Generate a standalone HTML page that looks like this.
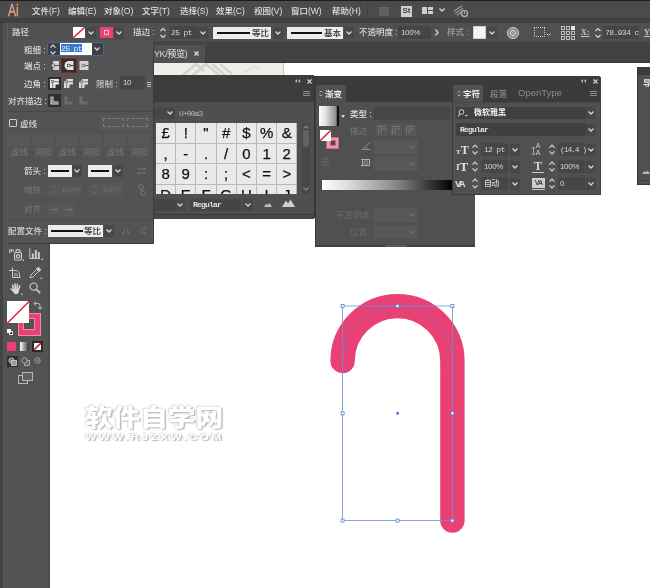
<!DOCTYPE html>
<html lang="zh-CN">
<head>
<meta charset="utf-8">
<title>Ai</title>
<style>
*{box-sizing:border-box;margin:0;padding:0}
html,body{width:650px;height:588px;overflow:hidden;background:#fff}
body{will-change:transform}
body{position:relative;font-family:"Liberation Sans","Noto Sans CJK SC",sans-serif;font-size:8.5px;color:#d6d6d6;line-height:1;font-weight:500}
.a{position:absolute}
.t{position:absolute;white-space:nowrap;line-height:10px;height:10px}
.dim{color:#7a7a7a}
.m{color:#e2e2e2}
.inp{position:absolute;background:#454545;border-radius:1px}
.wb{position:absolute;background:#ececec}
svg{position:absolute;overflow:visible}
.sans0{font-family:"Liberation Sans",sans-serif;letter-spacing:-0.35px !important}
.mono{font-family:"Liberation Mono","Noto Sans CJK SC",monospace}
</style>
</head>
<body>

<!-- ===== canvas strip under tab bar ===== -->
<div class="a" id="strip" style="left:154px;top:63px;width:130px;height:12px;background:#efeee9;overflow:hidden;border-right:1px solid #c4c4c4">
<svg style="left:0;top:0" width="130" height="12" viewBox="0 0 130 12"><g stroke="#d6d3cc" stroke-width="2.6" fill="none"><path d="M28 13 L42 1 L50 8 M38 13 L52 1 L66 13 M58 1 L72 13 M66 1 L78 11"/><path d="M90 10 L100 3 L106 7" stroke-width="1.6" stroke="#e0ddd7"/></g></svg></div>


<!-- ===== canvas artwork ===== -->
<div class="t" style="left:85px;top:405px;font-size:24px;line-height:26px;height:26px;color:#fff;font-weight:900;transform:scaleX(1.15);transform-origin:0 0;text-shadow:1.3px 1.3px 1px #bcbcbc,-1px -1px 1px #e0e0e0,0 0 2px #cfcfcf">软件自学网</div>
<div class="t" style="left:85px;top:431px;font-size:9.5px;line-height:11px;height:11px;color:#fff;font-weight:bold;letter-spacing:1.9px;transform:scaleX(1.245);transform-origin:0 0;text-shadow:1.3px 1.3px 1px #bcbcbc,-1px -1px 1px #e0e0e0,0 0 2px #cfcfcf">WWW.RJZXW.COM</div>
<svg style="left:0;top:0" width="650" height="588" viewBox="0 0 650 588">
<path d="M342.6 361 A54.9 54.9 0 0 1 452.4 361 V520.6" fill="none" stroke="#e94174" stroke-width="24.4" stroke-linecap="round"/>
<path d="M342.6 361 A54.9 54.9 0 0 1 452.4 361 V520.6" fill="none" stroke="#8c6cc8" stroke-width="1" opacity="0.8"/>
<rect x="342.6" y="306" width="109.8" height="214.6" fill="none" stroke="#6f8fd8" stroke-width="0.8"/>
<g fill="#fff" stroke="#5f7fd0" stroke-width="0.8">
<rect x="341.1" y="304.5" width="3" height="3"/><rect x="396" y="304.5" width="3" height="3"/><rect x="450.9" y="304.5" width="3" height="3"/>
<rect x="341.1" y="411.8" width="3" height="3"/><rect x="450.9" y="411.8" width="3" height="3"/>
<rect x="341.1" y="519.1" width="3" height="3"/><rect x="396" y="519.1" width="3" height="3"/><rect x="450.9" y="519.1" width="3" height="3"/>
</g>
<rect x="396.3" y="412" width="2.6" height="2.6" fill="#4a78c8"/>
</svg>

<!-- ===== top bars ===== -->
<div class="a" style="left:0;top:0;width:650px;height:1.3px;background:#1c1c1c"></div>
<div class="a" id="menubar" style="left:0;top:1.3px;width:650px;height:17px;background:#4b4b4b"></div>
<div class="a" style="left:0;top:18px;width:650px;height:4.6px;background:#404040"></div>
<div class="a" id="ctrlbar" style="left:0;top:22.5px;width:650px;height:18.5px;background:#505050"></div>
<div class="a" style="left:0;top:41px;width:650px;height:3px;background:#454545"></div>
<div class="a" id="tabbar" style="left:0;top:44px;width:650px;height:19px;background:#424242"></div>
<div class="a" id="tab" style="left:153px;top:45px;width:52px;height:18px;background:#515151"></div>
<div class="a" style="left:205px;top:61.5px;width:445px;height:1.5px;background:#383838"></div>


<!-- ===== menu bar content ===== -->
<div class="t" style="left:8px;top:3px;font-size:16px;line-height:16px;height:16px;color:#dba383;transform:scaleX(0.76);transform-origin:0 0;-webkit-text-stroke:0.35px #dba383">Ai</div>
<div class="t m" style="left:32px;top:6px">文件(F)</div>
<div class="t m" style="left:68px;top:6px">编辑(E)</div>
<div class="t m" style="left:104px;top:6px">对象(O)</div>
<div class="t m" style="left:142px;top:6px">文字(T)</div>
<div class="t m" style="left:180px;top:6px">选择(S)</div>
<div class="t m" style="left:216px;top:6px">效果(C)</div>
<div class="t m" style="left:254px;top:6px">视图(V)</div>
<div class="t m" style="left:291px;top:6px">窗口(W)</div>
<div class="t m" style="left:332px;top:6px">帮助(H)</div>
<div class="a" style="left:367px;top:4px;width:1px;height:13px;background:#414141"></div>
<div class="a" style="left:378.5px;top:6.5px;width:10.5px;height:9.5px;background:#606060"></div>
<div class="a" style="left:401px;top:6px;width:11px;height:10.5px;background:#cfcfcf;color:#444;font-size:8px;line-height:10.5px;text-align:center;font-weight:bold">St</div>
<div class="a" style="left:422px;top:6.5px;width:5px;height:7.5px;background:#cfcfcf"></div>
<div class="a" style="left:428px;top:6.5px;width:5px;height:3px;background:#cfcfcf"></div>
<div class="a" style="left:428px;top:10.5px;width:5px;height:3.5px;background:#cfcfcf"></div>
<svg style="left:439px;top:8px" width="6" height="4" viewBox="0 0 6 4"><path d="M0.5 0.5 L3 3 L5.5 0.5" fill="none" stroke="#d6d6d6" stroke-width="1.3"/></svg>
<svg style="left:453px;top:4px" width="16" height="14" viewBox="0 0 16 14"><path d="M1 7 L9 2 M2 9.5 L10 4.5 M4 11 L9 8" stroke="#9a9a9a" stroke-width="1.4" fill="none"/><circle cx="11.5" cy="9.5" r="3" fill="none" stroke="#bdbdbd" stroke-width="1.1"/><path d="M11.5 7.5 V9.7" stroke="#bdbdbd" stroke-width="1"/></svg>

<!-- ===== control bar content ===== -->
<div class="a" style="left:7px;top:23px;width:1px;height:18px;background:#5f5f5f"></div>
<div class="t" style="left:12px;top:27px">路径</div>
<div class="a" style="left:73px;top:27px;width:12px;height:11px;background:#fff;overflow:hidden"><svg style="left:0;top:0" width="12" height="11"><path d="M0 11 L12 0" stroke="#d8232a" stroke-width="1.4"/></svg></div>
<div class="a" style="left:86px;top:26.5px;width:10px;height:12.5px;background:#474747;border-radius:1.5px"></div><svg class="dd" style="left:88px;top:31px" width="6" height="4" viewBox="0 0 6 4"><path d="M0.5 0.5 L3 3 L5.5 0.5" fill="none" stroke="#d6d6d6" stroke-width="1.3"/></svg>
<div class="a" style="left:100px;top:27px;width:13px;height:11px;background:#e94174"></div>
<div class="a" style="left:104px;top:30px;width:5px;height:5px;border:1px solid #f6c1d2"></div>
<div class="a" style="left:114px;top:26.5px;width:10px;height:12.5px;background:#474747;border-radius:1.5px"></div><svg class="dd" style="left:116px;top:31px" width="6" height="4" viewBox="0 0 6 4"><path d="M0.5 0.5 L3 3 L5.5 0.5" fill="none" stroke="#d6d6d6" stroke-width="1.3"/></svg>
<div class="t" style="left:133px;top:27px">描边 :</div>
<svg style="left:160px;top:27px" width="6" height="12" viewBox="0 0 6 12"><path d="M0.5 4 L3 1.5 L5.5 4 M0.5 8 L3 10.5 L5.5 8" fill="none" stroke="#d6d6d6" stroke-width="1.2"/></svg>
<div class="inp" style="left:169px;top:26px;width:29px;height:13px"></div>
<div class="t mono" style="left:171px;top:28px;font-size:8px;letter-spacing:-0.6px">25 pt</div>
<div class="a" style="left:198px;top:26.5px;width:10px;height:12.5px;background:#474747;border-radius:1.5px"></div><svg class="dd" style="left:200px;top:31px" width="6" height="4" viewBox="0 0 6 4"><path d="M0.5 0.5 L3 3 L5.5 0.5" fill="none" stroke="#d6d6d6" stroke-width="1.3"/></svg>
<div class="wb" style="left:213px;top:27px;width:58px;height:12px"></div>
<div class="a" style="left:217px;top:31.5px;width:33px;height:2.6px;background:#111"></div>
<div class="t" style="left:252px;top:28px;color:#333">等比</div>
<div class="a" style="left:273px;top:26.5px;width:10px;height:12.5px;background:#474747;border-radius:1.5px"></div><svg class="dd" style="left:275px;top:31px" width="6" height="4" viewBox="0 0 6 4"><path d="M0.5 0.5 L3 3 L5.5 0.5" fill="none" stroke="#d6d6d6" stroke-width="1.3"/></svg>
<div class="wb" style="left:287px;top:27px;width:56px;height:12px"></div>
<div class="a" style="left:291px;top:31.5px;width:31px;height:2.6px;background:#111"></div>
<div class="t" style="left:324px;top:28px;color:#333">基本</div>
<div class="a" style="left:344px;top:26.5px;width:10px;height:12.5px;background:#474747;border-radius:1.5px"></div><svg class="dd" style="left:346px;top:31px" width="6" height="4" viewBox="0 0 6 4"><path d="M0.5 0.5 L3 3 L5.5 0.5" fill="none" stroke="#d6d6d6" stroke-width="1.3"/></svg>
<div class="t" style="left:359px;top:27px">不透明度 :</div>
<div class="inp" style="left:398px;top:26px;width:33px;height:13px"></div>
<div class="t sans0" style="left:401px;top:28px;font-size:8px;letter-spacing:-0.6px">100%</div>
<svg style="left:435px;top:29px" width="4" height="7" viewBox="0 0 4 7"><path d="M0.5 0.5 L3 3.5 L0.5 6.5" fill="none" stroke="#d6d6d6" stroke-width="1.3"/></svg>
<div class="t dim" style="left:447px;top:27px;color:#a0a0a0">样式 :</div>
<div class="a" style="left:473px;top:26px;width:13px;height:13px;background:#f4f4f4;border:1px solid #cfcfcf"></div>
<div class="a" style="left:487px;top:26.5px;width:10px;height:12.5px;background:#474747;border-radius:1.5px"></div><svg class="dd" style="left:489px;top:31px" width="6" height="4" viewBox="0 0 6 4"><path d="M0.5 0.5 L3 3 L5.5 0.5" fill="none" stroke="#d6d6d6" stroke-width="1.3"/></svg>
<svg style="left:506px;top:26px" width="14" height="14" viewBox="0 0 14 14"><circle cx="7" cy="7" r="5.6" fill="#8a8a8a" stroke="#c8c8c8" stroke-width="1"/><circle cx="7" cy="7" r="2.6" fill="none" stroke="#d8d8d8" stroke-width="1"/><path d="M7 1.5 V12.5 M1.5 7 H12.5" stroke="#b0b0b0" stroke-width="0.7"/></svg>
<div class="a" style="left:534px;top:27px;width:11px;height:10px;border:1px dotted #c8c8c8"></div>
<svg class="dd" style="left:546px;top:33px" width="5" height="3" viewBox="0 0 5 3"><path d="M0.5 0.5 L2.5 2.5 L4.5 0.5" fill="none" stroke="#c8c8c8" stroke-width="1"/></svg>
<svg style="left:561px;top:26px" width="14" height="14" viewBox="0 0 14 14"><g fill="none" stroke="#c8c8c8" stroke-width="0.9"><rect x="0.5" y="0.5" width="3" height="3"/><rect x="5.5" y="0.5" width="3" height="3"/><rect x="0.5" y="5.5" width="3" height="3"/><rect x="5.5" y="5.5" width="3" height="3"/><rect x="10.5" y="5.5" width="3" height="3"/><rect x="0.5" y="10.5" width="3" height="3"/><rect x="5.5" y="10.5" width="3" height="3"/><rect x="10.5" y="10.5" width="3" height="3"/></g><rect x="10" y="0" width="4" height="4" fill="#e8e8e8"/></svg>
<div class="t" style="left:581px;top:28px;font-family:'Liberation Serif',serif;font-size:8px;font-weight:bold;color:#c4c4c4;text-decoration:underline">X:</div>
<svg style="left:595px;top:27px" width="6" height="12" viewBox="0 0 6 12"><path d="M0.5 4 L3 1.5 L5.5 4 M0.5 8 L3 10.5 L5.5 8" fill="none" stroke="#d6d6d6" stroke-width="1.2"/></svg>
<div class="inp" style="left:603px;top:26px;width:36px;height:13px"></div>
<div class="t mono" style="left:605px;top:28px;font-size:8px;letter-spacing:-0.6px">78.934 c</div>
<div class="t" style="left:644px;top:28px;font-family:'Liberation Serif',serif;font-size:8px;font-weight:bold;color:#c4c4c4;text-decoration:underline">Y:</div>

<!-- ===== tab ===== -->
<div class="t" style="left:154px;top:49px;font-size:9px;letter-spacing:-0.4px">YK/预览)</div>
<svg style="left:194px;top:51px" width="5" height="5" viewBox="0 0 5 5"><path d="M0.5 0.5 L4.5 4.5 M4.5 0.5 L0.5 4.5" stroke="#e0e0e0" stroke-width="1.3"/></svg>

<!-- ===== tools panel ===== -->
<div class="a" id="tools" style="left:0;top:40px;width:50px;height:548px;background:#535353"></div>
<div class="a" style="left:0;top:23px;width:3px;height:565px;background:#444"></div>


<!-- tools content -->
<svg style="left:9px;top:247.5px" width="15" height="13" viewBox="0 0 15 13"><g stroke="#d0d0d0" fill="none" stroke-width="1.1"><rect x="5.5" y="4.5" width="7" height="7.5" rx="1.2"/><path d="M7 4.5 V2.5 Q9 0.8 11 2.5 V4.5"/><circle cx="9" cy="8.3" r="1.7"/><path d="M0.8 1 V5 M2.6 1 V4 M4.2 1.5 V3.5"/></g><path d="M13 13 H15 V11 Z" fill="#c8c8c8"/></svg>
<svg style="left:29px;top:248px" width="14" height="12" viewBox="0 0 14 12"><path d="M0.8 0.5 V10.5 H11" stroke="#c8c8c8" fill="none" stroke-width="1"/><path d="M3.8 10 V5.5 M6.8 10 V2 M9.8 10 V4" stroke="#d0d0d0" stroke-width="1.9"/><path d="M12 12 H14 V10 Z" fill="#c8c8c8"/></svg>
<svg style="left:9px;top:266.5px" width="12" height="11" viewBox="0 0 12 11"><path d="M0 3.5 H8 L10.5 6 V10.5 M3.5 0.5 V10.5 H11.5" stroke="#c8c8c8" fill="none" stroke-width="1"/><path d="M5 6 H8 L9 7 V9.5 H5 Z" fill="#8a8a8a"/></svg>
<svg style="left:29px;top:266px" width="13" height="13" viewBox="0 0 13 13"><path d="M1 12 L2 9 L7.5 3.5 L9.5 5.5 L4 11 Z" fill="none" stroke="#c8c8c8" stroke-width="1"/><path d="M7 2.5 L9.5 0.8 L12.2 3.5 L10.5 6 Z" fill="#c8c8c8"/><path d="M11 13 H13 V11 Z" fill="#c8c8c8"/></svg>
<svg style="left:10px;top:282.5px" width="13" height="12" viewBox="0 0 13 12"><g stroke="#d8d8d8" stroke-width="1.5" stroke-linecap="round" fill="none"><path d="M3.6 6 L2.6 2.2 M5.3 5.4 L5 0.9 M7 5.5 L7.4 1.3 M8.6 6.2 L9.7 3"/><path d="M3.3 8.2 L1 5.8" stroke-width="1.4"/></g><path d="M2.8 6 L8.8 5.6 Q9.6 8 7.8 11 H4.6 Q3.2 9.5 2.8 6 Z" fill="#d8d8d8"/><path d="M10.5 12 H12.5 V10 Z" fill="#c8c8c8"/></svg>
<svg style="left:29px;top:282px" width="12" height="12" viewBox="0 0 12 12"><circle cx="4.6" cy="4.6" r="3.6" fill="none" stroke="#c8c8c8" stroke-width="1.2"/><path d="M7.3 7.3 L11.2 11.2" stroke="#c8c8c8" stroke-width="1.7"/></svg>
<!-- fill / stroke -->
<div class="a" style="left:17.5px;top:312.5px;width:23px;height:23px;background:#e94174;border:1px solid #f08aa8"></div>
<div class="a" style="left:23px;top:318px;width:12px;height:12px;background:#535353;border:1px solid #f08aa8"></div>
<div class="a" style="left:6.5px;top:300.5px;width:22.5px;height:22.5px;background:#fff;overflow:hidden"><svg style="left:0;top:0" width="23" height="23"><path d="M0 22.5 L22.5 0" stroke="#d8232a" stroke-width="1.4"/></svg></div>
<svg style="left:33px;top:301px" width="9" height="9" viewBox="0 0 9 9"><path d="M1.5 2.5 H5 A2 2 0 0 1 7 4.5 V8" stroke="#c0c0c0" fill="none" stroke-width="1"/><path d="M3 0.5 L0.8 2.5 L3 4.5 M5 6 L7 8.3 L9 6" stroke="#c0c0c0" fill="none" stroke-width="1"/></svg>
<div class="a" style="left:9px;top:331px;width:4px;height:4px;background:#222;border:0.5px solid #ddd"></div>
<div class="a" style="left:7px;top:329px;width:4px;height:4px;background:#fff"></div>
<!-- color mode -->
<div class="a" style="left:7px;top:342px;width:9px;height:9px;background:#e94174"></div>
<div class="a" style="left:20px;top:342px;width:9px;height:9px;background:linear-gradient(90deg,#fff,#333)"></div>
<div class="a" style="left:32px;top:341px;width:11px;height:11px;background:#2b2b2b"></div>
<div class="a" style="left:34px;top:343px;width:7px;height:7px;background:#fff;overflow:hidden"><svg style="left:0;top:0" width="7" height="7"><path d="M0 7 L7 0" stroke="#d8232a" stroke-width="1.6"/></svg></div>
<!-- draw modes -->
<div class="a" style="left:7px;top:356px;width:11px;height:11px;background:#2f2f2f"></div>
<svg style="left:8px;top:357px" width="9" height="9" viewBox="0 0 9 9"><circle cx="3.5" cy="3.5" r="2.6" fill="#777" stroke="#d0d0d0" stroke-width="0.8"/><rect x="3.5" y="3.5" width="5" height="5" fill="#999" stroke="#d0d0d0" stroke-width="0.8"/></svg>
<svg style="left:21px;top:357px" width="9" height="9" viewBox="0 0 9 9"><rect x="3.5" y="3.5" width="5" height="5" fill="#6a6a6a" stroke="#b8b8b8" stroke-width="0.8"/><circle cx="3.5" cy="3.5" r="2.6" fill="#535353" stroke="#b8b8b8" stroke-width="0.8"/></svg>
<svg style="left:34px;top:357px" width="8" height="8" viewBox="0 0 8 8"><circle cx="3.5" cy="3.5" r="2.8" fill="#535353" stroke="#a8a8a8" stroke-width="0.8"/><rect x="2.5" y="2.5" width="3" height="2" fill="#888"/></svg>
<svg style="left:18px;top:372px" width="15" height="12" viewBox="0 0 15 12"><rect x="0.5" y="3.5" width="9" height="8" fill="#535353" stroke="#b8b8b8" stroke-width="1"/><rect x="4.5" y="0.5" width="10" height="8" fill="#606060" stroke="#b8b8b8" stroke-width="1"/></svg>
<div class="a" style="left:49px;top:243px;width:1px;height:345px;background:#454545"></div>

<!-- ===== glyph panel ===== -->
<div class="a" id="glyph" style="left:154px;top:75px;width:160px;height:144px;background:#4f4f4f"></div>
<div class="a" style="left:154px;top:75px;width:160px;height:27px;background:#3c3c3c"></div>


<!-- glyph panel content -->
<svg style="left:295px;top:79px" width="5" height="4" viewBox="0 0 5 4"><path d="M2 0 L0 2 L2 4 Z M5 0 L3 2 L5 4 Z" fill="#bdbdbd"/></svg>
<svg style="left:307px;top:79px" width="5" height="5" viewBox="0 0 5 5"><path d="M0.5 0.5 L4.5 4.5 M4.5 0.5 L0.5 4.5" stroke="#d0d0d0" stroke-width="1.2"/></svg>
<svg style="left:303px;top:91px" width="7" height="5" viewBox="0 0 7 5"><path d="M0 0.5 H7 M0 2.5 H7 M0 4.5 H7" stroke="#8c8c8c" stroke-width="1"/></svg>

<div class="a" style="left:154px;top:107px;width:21px;height:12px;background:#464646"></div>
<svg style="left:167px;top:111px" width="6" height="4" viewBox="0 0 6 4"><path d="M0.5 0.5 L3 3 L5.5 0.5" fill="none" stroke="#d6d6d6" stroke-width="1.3"/></svg>
<div class="t mono" style="left:179px;top:109px;font-size:8px;letter-spacing:-0.9px;color:#b8b8b8">U+00a3</div>
<div class="a" id="grid" style="left:156px;top:123px;width:141px;height:71px;background:#e9e9e9;overflow:hidden;color:#111;font-family:'Liberation Sans',sans-serif">
<div class="a" style="left:0.0px;top:0.0px;width:20.2px;height:20.5px;border-right:1px solid #b9b9b9;border-bottom:1px solid #b9b9b9;text-align:center;font-size:15px;line-height:20.5px;-webkit-text-stroke:0.25px #111">£</div><div class="a" style="left:20.2px;top:0.0px;width:20.2px;height:20.5px;border-right:1px solid #b9b9b9;border-bottom:1px solid #b9b9b9;text-align:center;font-size:15px;line-height:20.5px;-webkit-text-stroke:0.25px #111">!</div><div class="a" style="left:40.4px;top:0.0px;width:20.2px;height:20.5px;border-right:1px solid #b9b9b9;border-bottom:1px solid #b9b9b9;text-align:center;font-size:15px;line-height:20.5px;-webkit-text-stroke:0.25px #111">&quot;</div><div class="a" style="left:60.6px;top:0.0px;width:20.2px;height:20.5px;border-right:1px solid #b9b9b9;border-bottom:1px solid #b9b9b9;text-align:center;font-size:15px;line-height:20.5px;-webkit-text-stroke:0.25px #111">#</div><div class="a" style="left:80.8px;top:0.0px;width:20.2px;height:20.5px;border-right:1px solid #b9b9b9;border-bottom:1px solid #b9b9b9;text-align:center;font-size:15px;line-height:20.5px;-webkit-text-stroke:0.25px #111">$</div><div class="a" style="left:101.0px;top:0.0px;width:20.2px;height:20.5px;border-right:1px solid #b9b9b9;border-bottom:1px solid #b9b9b9;text-align:center;font-size:15px;line-height:20.5px;-webkit-text-stroke:0.25px #111">%</div><div class="a" style="left:121.2px;top:0.0px;width:20.2px;height:20.5px;border-right:1px solid #b9b9b9;border-bottom:1px solid #b9b9b9;text-align:center;font-size:15px;line-height:20.5px;-webkit-text-stroke:0.25px #111">&amp;</div><div class="a" style="left:0.0px;top:20.5px;width:20.2px;height:20.5px;border-right:1px solid #b9b9b9;border-bottom:1px solid #b9b9b9;text-align:center;font-size:15px;line-height:20.5px;-webkit-text-stroke:0.25px #111">,</div><div class="a" style="left:20.2px;top:20.5px;width:20.2px;height:20.5px;border-right:1px solid #b9b9b9;border-bottom:1px solid #b9b9b9;text-align:center;font-size:15px;line-height:20.5px;-webkit-text-stroke:0.25px #111">-</div><div class="a" style="left:40.4px;top:20.5px;width:20.2px;height:20.5px;border-right:1px solid #b9b9b9;border-bottom:1px solid #b9b9b9;text-align:center;font-size:15px;line-height:20.5px;-webkit-text-stroke:0.25px #111">.</div><div class="a" style="left:60.6px;top:20.5px;width:20.2px;height:20.5px;border-right:1px solid #b9b9b9;border-bottom:1px solid #b9b9b9;text-align:center;font-size:15px;line-height:20.5px;-webkit-text-stroke:0.25px #111">/</div><div class="a" style="left:80.8px;top:20.5px;width:20.2px;height:20.5px;border-right:1px solid #b9b9b9;border-bottom:1px solid #b9b9b9;text-align:center;font-size:15px;line-height:20.5px;-webkit-text-stroke:0.25px #111">0</div><div class="a" style="left:101.0px;top:20.5px;width:20.2px;height:20.5px;border-right:1px solid #b9b9b9;border-bottom:1px solid #b9b9b9;text-align:center;font-size:15px;line-height:20.5px;-webkit-text-stroke:0.25px #111">1</div><div class="a" style="left:121.2px;top:20.5px;width:20.2px;height:20.5px;border-right:1px solid #b9b9b9;border-bottom:1px solid #b9b9b9;text-align:center;font-size:15px;line-height:20.5px;-webkit-text-stroke:0.25px #111">2</div><div class="a" style="left:0.0px;top:41.0px;width:20.2px;height:20.5px;border-right:1px solid #b9b9b9;border-bottom:1px solid #b9b9b9;text-align:center;font-size:15px;line-height:20.5px;-webkit-text-stroke:0.25px #111">8</div><div class="a" style="left:20.2px;top:41.0px;width:20.2px;height:20.5px;border-right:1px solid #b9b9b9;border-bottom:1px solid #b9b9b9;text-align:center;font-size:15px;line-height:20.5px;-webkit-text-stroke:0.25px #111">9</div><div class="a" style="left:40.4px;top:41.0px;width:20.2px;height:20.5px;border-right:1px solid #b9b9b9;border-bottom:1px solid #b9b9b9;text-align:center;font-size:15px;line-height:20.5px;-webkit-text-stroke:0.25px #111">:</div><div class="a" style="left:60.6px;top:41.0px;width:20.2px;height:20.5px;border-right:1px solid #b9b9b9;border-bottom:1px solid #b9b9b9;text-align:center;font-size:15px;line-height:20.5px;-webkit-text-stroke:0.25px #111">;</div><div class="a" style="left:80.8px;top:41.0px;width:20.2px;height:20.5px;border-right:1px solid #b9b9b9;border-bottom:1px solid #b9b9b9;text-align:center;font-size:15px;line-height:20.5px;-webkit-text-stroke:0.25px #111">&lt;</div><div class="a" style="left:101.0px;top:41.0px;width:20.2px;height:20.5px;border-right:1px solid #b9b9b9;border-bottom:1px solid #b9b9b9;text-align:center;font-size:15px;line-height:20.5px;-webkit-text-stroke:0.25px #111">=</div><div class="a" style="left:121.2px;top:41.0px;width:20.2px;height:20.5px;border-right:1px solid #b9b9b9;border-bottom:1px solid #b9b9b9;text-align:center;font-size:15px;line-height:20.5px;-webkit-text-stroke:0.25px #111">&gt;</div><div class="a" style="left:0.0px;top:61.5px;width:20.2px;height:20.5px;border-right:1px solid #b9b9b9;border-bottom:1px solid #b9b9b9;text-align:center;font-size:15px;line-height:20.5px;-webkit-text-stroke:0.25px #111">D</div><div class="a" style="left:20.2px;top:61.5px;width:20.2px;height:20.5px;border-right:1px solid #b9b9b9;border-bottom:1px solid #b9b9b9;text-align:center;font-size:15px;line-height:20.5px;-webkit-text-stroke:0.25px #111">E</div><div class="a" style="left:40.4px;top:61.5px;width:20.2px;height:20.5px;border-right:1px solid #b9b9b9;border-bottom:1px solid #b9b9b9;text-align:center;font-size:15px;line-height:20.5px;-webkit-text-stroke:0.25px #111">F</div><div class="a" style="left:60.6px;top:61.5px;width:20.2px;height:20.5px;border-right:1px solid #b9b9b9;border-bottom:1px solid #b9b9b9;text-align:center;font-size:15px;line-height:20.5px;-webkit-text-stroke:0.25px #111">G</div><div class="a" style="left:80.8px;top:61.5px;width:20.2px;height:20.5px;border-right:1px solid #b9b9b9;border-bottom:1px solid #b9b9b9;text-align:center;font-size:15px;line-height:20.5px;-webkit-text-stroke:0.25px #111">H</div><div class="a" style="left:101.0px;top:61.5px;width:20.2px;height:20.5px;border-right:1px solid #b9b9b9;border-bottom:1px solid #b9b9b9;text-align:center;font-size:15px;line-height:20.5px;-webkit-text-stroke:0.25px #111">I</div><div class="a" style="left:121.2px;top:61.5px;width:20.2px;height:20.5px;border-right:1px solid #b9b9b9;border-bottom:1px solid #b9b9b9;text-align:center;font-size:15px;line-height:20.5px;-webkit-text-stroke:0.25px #111">J</div>
</div>
<div class="a" style="left:302px;top:123px;width:8px;height:71px;background:#474747;border-radius:3px"></div>
<div class="a" style="left:303px;top:130px;width:6px;height:17px;background:#636363;border-radius:3px"></div>
<svg style="left:303px;top:125px" width="6" height="4" viewBox="0 0 6 4"><path d="M0.5 3.5 L3 1 L5.5 3.5" fill="none" stroke="#8a8a8a" stroke-width="1.1"/></svg>
<svg style="left:303px;top:187px" width="6" height="4" viewBox="0 0 6 4"><path d="M0.5 0.5 L3 3 L5.5 0.5" fill="none" stroke="#8a8a8a" stroke-width="1.1"/></svg>
<div class="inp" style="left:154px;top:199px;width:21px;height:12px;background:#454545"></div>
<div class="a" style="left:175px;top:198.5px;width:10px;height:12.5px;background:#474747;border-radius:1.5px"></div><svg style="left:177px;top:203px" width="6" height="4" viewBox="0 0 6 4"><path d="M0.5 0.5 L3 3 L5.5 0.5" fill="none" stroke="#d6d6d6" stroke-width="1.3"/></svg>
<div class="inp" style="left:190px;top:199px;width:51px;height:12px;background:#454545"></div>
<div class="t mono" style="left:193px;top:200px;font-size:8px;letter-spacing:-0.8px;font-weight:bold;color:#e0e0e0">Regular</div>
<div class="a" style="left:243px;top:198.5px;width:10px;height:12.5px;background:#474747;border-radius:1.5px"></div><svg style="left:245px;top:203px" width="6" height="4" viewBox="0 0 6 4"><path d="M0.5 0.5 L3 3 L5.5 0.5" fill="none" stroke="#d6d6d6" stroke-width="1.3"/></svg>
<svg style="left:264px;top:202px" width="8" height="5" viewBox="0 0 8 5"><path d="M0 5 L2.5 1.5 L4 3 L5.5 1 L8 5 Z" fill="#bdbdbd"/></svg>
<svg style="left:282px;top:199px" width="13" height="8" viewBox="0 0 13 8"><path d="M0 8 L4 1.5 L6 4.5 L8.5 0.5 L13 8 Z" fill="#cfcfcf"/></svg>
<div class="a" style="left:154px;top:214px;width:160px;height:1px;background:#3a3a3a"></div>
<div class="a" style="left:154px;top:215px;width:160px;height:4px;background:#474747"></div>
<div class="a" style="left:314px;top:76px;width:1px;height:142px;background:#333"></div>

<!-- ===== gradient panel ===== -->
<div class="a" id="grad" style="left:315px;top:76px;width:160px;height:171px;background:#505050"></div>
<div class="a" style="left:315px;top:76px;width:160px;height:26px;background:#3b3b3b"></div>


<!-- gradient panel content -->
<div class="a" style="left:316px;top:85px;width:30px;height:17px;background:#505050"></div>
<svg style="left:319px;top:90px" width="4" height="7" viewBox="0 0 4 7"><path d="M0.5 2.5 L2 1 L3.5 2.5 M0.5 4.5 L2 6 L3.5 4.5" fill="none" stroke="#c0c0c0" stroke-width="0.8"/></svg>
<div class="t" style="left:325px;top:89px;color:#e6e6e6;font-weight:bold">渐变</div>
<div class="a" style="left:319px;top:106px;width:20px;height:20px;background:linear-gradient(90deg,#fff 0%,#e4e4e4 30%,#8c8c8c 85%,#111 93%,#000 100%)"></div>
<svg style="left:341px;top:115px" width="4" height="3" viewBox="0 0 4 3"><path d="M0 0 H4 L2 3 Z" fill="#cfcfcf"/></svg>
<div class="t" style="left:350px;top:109px;color:#e0e0e0">类型 :</div>
<div class="a" style="left:374px;top:107px;width:76px;height:12.5px;background:#464646"></div>
<div class="a" style="left:326px;top:136.5px;width:13px;height:12.5px;background:#e79ab2;border:1px solid #de5e88"></div>
<div class="a" style="left:329.5px;top:140px;width:6px;height:6px;background:#4a4a4a;border:1px solid #de5e88"></div>
<div class="a" style="left:320px;top:130px;width:11px;height:11px;background:#fff;overflow:hidden"><svg style="left:0;top:0" width="11" height="11"><path d="M0 11 L11 0" stroke="#c8222c" stroke-width="1.4"/></svg></div>

<div class="t" style="left:350px;top:126px;color:#727272">描边 :</div>
<div class="a" style="left:376px;top:124px;width:12px;height:12px;background:#585858"></div>
<div class="a" style="left:390px;top:124px;width:12px;height:12px;background:#585858"></div>
<div class="a" style="left:404px;top:124px;width:12px;height:12px;background:#585858"></div>
<svg style="left:378px;top:126px" width="8" height="8" viewBox="0 0 8 8"><path d="M0.5 8 V0.5 H8 M3 8 V3 H8" stroke="#747474" stroke-width="1" fill="none"/></svg>
<svg style="left:392px;top:126px" width="8" height="8" viewBox="0 0 8 8"><path d="M0.5 8 V0.5 H8 M3 8 V3 H8" stroke="#747474" stroke-width="1" fill="none"/></svg>
<svg style="left:406px;top:126px" width="8" height="8" viewBox="0 0 8 8"><path d="M0.5 8 V0.5 H8 M3 8 V3 H8" stroke="#747474" stroke-width="1" fill="none"/></svg>
<svg style="left:361px;top:142px" width="10" height="8" viewBox="0 0 10 8"><path d="M9 0.5 L0.8 7.5 H9.5 M6 7.5 A4 4 0 0 0 4.5 4.3" stroke="#8a8a8a" stroke-width="1" fill="none"/></svg>
<div class="a" style="left:374px;top:140px;width:44px;height:14px;background:#575757"></div>
<svg style="left:409px;top:145px" width="6" height="4" viewBox="0 0 6 4"><path d="M0.5 0.5 L3 3 L5.5 0.5" fill="none" stroke="#6e6e6e" stroke-width="1.3"/></svg>
<svg style="left:321px;top:157px" width="10" height="10" viewBox="0 0 10 10"><path d="M0.5 2 H6 M0.5 5 H9 M2 8 H9 M6 0.5 V3.5" stroke="#6a6a6a" stroke-width="1" fill="none"/></svg>
<svg style="left:361px;top:158px" width="10" height="9" viewBox="0 0 10 9"><rect x="1.5" y="1.5" width="7" height="6" fill="none" stroke="#b0b0b0" stroke-width="1"/><circle cx="5" cy="4.5" r="1.8" fill="none" stroke="#b0b0b0" stroke-width="0.8"/><path d="M0 1.5 H1.5 M0 7.5 H1.5" stroke="#b0b0b0" stroke-width="1"/></svg>
<div class="a" style="left:374px;top:157px;width:44px;height:14px;background:#575757"></div>
<svg style="left:409px;top:162px" width="6" height="4" viewBox="0 0 6 4"><path d="M0.5 0.5 L3 3 L5.5 0.5" fill="none" stroke="#6e6e6e" stroke-width="1.3"/></svg>
<div class="a" style="left:322px;top:179.7px;width:130px;height:10.8px;background:linear-gradient(90deg,#fff 0%,#dcdcdc 20%,#858585 58%,#101010 95%,#000 100%)"></div>
<div class="t" style="left:336px;top:210px;color:#666">不透明度 :</div>
<div class="a" style="left:373px;top:208px;width:45px;height:14px;background:#575757"></div>
<svg style="left:409px;top:213px" width="6" height="4" viewBox="0 0 6 4"><path d="M0.5 0.5 L3 3 L5.5 0.5" fill="none" stroke="#6e6e6e" stroke-width="1.3"/></svg>
<div class="t" style="left:350px;top:227px;color:#666">位置 :</div>
<div class="a" style="left:373px;top:225px;width:45px;height:14px;background:#575757"></div>
<svg style="left:409px;top:230px" width="6" height="4" viewBox="0 0 6 4"><path d="M0.5 0.5 L3 3 L5.5 0.5" fill="none" stroke="#6e6e6e" stroke-width="1.3"/></svg>
<div class="a" style="left:315px;top:245px;width:160px;height:2px;background:#3e3e3e"></div>
<div class="a" style="left:385px;top:245px;width:22px;height:2px;background:#5a5a5a"></div>
<div class="a" style="left:315px;top:76px;width:1px;height:171px;background:#3a3a3a"></div>

<!-- ===== char panel ===== -->
<div class="a" id="char" style="left:452px;top:76px;width:149px;height:119px;background:#505050;border-radius:0 3px 0 0"></div>
<div class="a" style="left:452px;top:76px;width:149px;height:26px;background:#3b3b3b;border-radius:0 3px 0 0"></div>


<!-- char panel content -->
<div class="a" style="left:453px;top:85px;width:30px;height:17px;background:#505050"></div>
<svg style="left:457px;top:90px" width="4" height="7" viewBox="0 0 4 7"><path d="M0.5 2.5 L2 1 L3.5 2.5 M0.5 4.5 L2 6 L3.5 4.5" fill="none" stroke="#c0c0c0" stroke-width="0.8"/></svg>
<div class="t" style="left:463px;top:89px;color:#ececec;font-weight:bold">字符</div>
<div class="t" style="left:490px;top:89px;color:#8c8c8c">段落</div>
<div class="t" style="left:518px;top:88px;color:#8c8c8c;font-size:9.5px">OpenType</div>
<svg style="left:581px;top:79px" width="5" height="4" viewBox="0 0 5 4"><path d="M2 0 L0 2 L2 4 Z M5 0 L3 2 L5 4 Z" fill="#bdbdbd"/></svg>
<svg style="left:593px;top:79px" width="5" height="5" viewBox="0 0 5 5"><path d="M0.5 0.5 L4.5 4.5 M4.5 0.5 L0.5 4.5" stroke="#d0d0d0" stroke-width="1.2"/></svg>
<svg style="left:590px;top:91px" width="7" height="5" viewBox="0 0 7 5"><path d="M0 0.5 H7 M0 2.5 H7 M0 4.5 H7" stroke="#8c8c8c" stroke-width="1"/></svg>
<div class="a" style="left:452px;top:102px;width:149px;height:1px;background:#464646"></div>
<div class="inp" style="left:456px;top:107px;width:130px;height:12px;background:#404040"></div>
<svg style="left:457px;top:109px" width="11" height="8" viewBox="0 0 11 8"><circle cx="4.5" cy="3" r="2.4" fill="none" stroke="#d0d0d0" stroke-width="1"/><path d="M3 5 L0.8 7.5 M8 6.5 H10.5" stroke="#d0d0d0" stroke-width="1.1"/></svg>
<div class="t" style="left:474px;top:108px;color:#f0f0f0;font-weight:bold;font-size:8px">微软雅黑</div>
<div class="a" style="left:586px;top:106.5px;width:10px;height:12.5px;background:#474747;border-radius:1.5px"></div><svg style="left:588px;top:111px" width="6" height="4" viewBox="0 0 6 4"><path d="M0.5 0.5 L3 3 L5.5 0.5" fill="none" stroke="#d6d6d6" stroke-width="1.3"/></svg>
<div class="inp" style="left:456px;top:123px;width:130px;height:13px;background:#404040"></div>
<div class="t mono" style="left:460px;top:125px;font-size:8px;letter-spacing:-0.8px;font-weight:bold;color:#e4e4e4">Regular</div>
<div class="a" style="left:586px;top:123.5px;width:10px;height:12.5px;background:#474747;border-radius:1.5px"></div><svg style="left:588px;top:128px" width="6" height="4" viewBox="0 0 6 4"><path d="M0.5 0.5 L3 3 L5.5 0.5" fill="none" stroke="#d6d6d6" stroke-width="1.3"/></svg>
<svg style="left:472px;top:144px" width="6" height="11" viewBox="0 0 6 11"><path d="M0.5 3.7 L3 1.2 L5.5 3.7 M0.5 7.3 L3 9.8 L5.5 7.3" fill="none" stroke="#d6d6d6" stroke-width="1.2"/></svg><div class="inp" style="left:481px;top:143px;width:27px;height:13px;background:#464646"></div><div class="t mono" style="left:484px;top:145px;font-size:8px;letter-spacing:-0.7px">12 pt</div><div class="a" style="left:510px;top:143.5px;width:10px;height:12.5px;background:#474747;border-radius:1.5px"></div><svg style="left:512px;top:148px" width="6" height="4" viewBox="0 0 6 4"><path d="M0.5 0.5 L3 3 L5.5 0.5" fill="none" stroke="#d6d6d6" stroke-width="1.3"/></svg><svg style="left:549px;top:144px" width="6" height="11" viewBox="0 0 6 11"><path d="M0.5 3.7 L3 1.2 L5.5 3.7 M0.5 7.3 L3 9.8 L5.5 7.3" fill="none" stroke="#d6d6d6" stroke-width="1.2"/></svg><div class="inp" style="left:558px;top:143px;width:27px;height:13px;background:#464646"></div><div class="t mono" style="left:560px;top:145px;font-size:8px;letter-spacing:-1.1px">(14.4 )</div><div class="a" style="left:586px;top:143.5px;width:10px;height:12.5px;background:#474747;border-radius:1.5px"></div><svg style="left:588px;top:148px" width="6" height="4" viewBox="0 0 6 4"><path d="M0.5 0.5 L3 3 L5.5 0.5" fill="none" stroke="#d6d6d6" stroke-width="1.3"/></svg>
<svg style="left:472px;top:161px" width="6" height="11" viewBox="0 0 6 11"><path d="M0.5 3.7 L3 1.2 L5.5 3.7 M0.5 7.3 L3 9.8 L5.5 7.3" fill="none" stroke="#d6d6d6" stroke-width="1.2"/></svg><div class="inp" style="left:481px;top:160px;width:27px;height:13px;background:#464646"></div><div class="t sans0" style="left:484px;top:162px;font-size:8px;letter-spacing:-0.7px">100%</div><div class="a" style="left:510px;top:160.5px;width:10px;height:12.5px;background:#474747;border-radius:1.5px"></div><svg style="left:512px;top:165px" width="6" height="4" viewBox="0 0 6 4"><path d="M0.5 0.5 L3 3 L5.5 0.5" fill="none" stroke="#d6d6d6" stroke-width="1.3"/></svg><svg style="left:549px;top:161px" width="6" height="11" viewBox="0 0 6 11"><path d="M0.5 3.7 L3 1.2 L5.5 3.7 M0.5 7.3 L3 9.8 L5.5 7.3" fill="none" stroke="#d6d6d6" stroke-width="1.2"/></svg><div class="inp" style="left:558px;top:160px;width:27px;height:13px;background:#464646"></div><div class="t sans0" style="left:560px;top:162px;font-size:8px;letter-spacing:-0.7px">100%</div><div class="a" style="left:586px;top:160.5px;width:10px;height:12.5px;background:#474747;border-radius:1.5px"></div><svg style="left:588px;top:165px" width="6" height="4" viewBox="0 0 6 4"><path d="M0.5 0.5 L3 3 L5.5 0.5" fill="none" stroke="#d6d6d6" stroke-width="1.3"/></svg>
<svg style="left:472px;top:178px" width="6" height="11" viewBox="0 0 6 11"><path d="M0.5 3.7 L3 1.2 L5.5 3.7 M0.5 7.3 L3 9.8 L5.5 7.3" fill="none" stroke="#d6d6d6" stroke-width="1.2"/></svg><div class="inp" style="left:481px;top:177px;width:27px;height:13px;background:#464646"></div><div class="t mono" style="left:484px;top:179px;font-size:8px;letter-spacing:-0.7px">自动</div><div class="a" style="left:510px;top:177.5px;width:10px;height:12.5px;background:#474747;border-radius:1.5px"></div><svg style="left:512px;top:182px" width="6" height="4" viewBox="0 0 6 4"><path d="M0.5 0.5 L3 3 L5.5 0.5" fill="none" stroke="#d6d6d6" stroke-width="1.3"/></svg><svg style="left:549px;top:178px" width="6" height="11" viewBox="0 0 6 11"><path d="M0.5 3.7 L3 1.2 L5.5 3.7 M0.5 7.3 L3 9.8 L5.5 7.3" fill="none" stroke="#d6d6d6" stroke-width="1.2"/></svg><div class="inp" style="left:558px;top:177px;width:27px;height:13px;background:#464646"></div><div class="t sans0" style="left:560px;top:179px;font-size:8px;letter-spacing:-0.7px">0</div><div class="a" style="left:586px;top:177.5px;width:10px;height:12.5px;background:#474747;border-radius:1.5px"></div><svg style="left:588px;top:182px" width="6" height="4" viewBox="0 0 6 4"><path d="M0.5 0.5 L3 3 L5.5 0.5" fill="none" stroke="#d6d6d6" stroke-width="1.3"/></svg>

<div class="t" style="left:456px;top:143px;font-family:'Liberation Serif',serif;font-weight:bold;font-size:9px;line-height:14px;height:14px;color:#e0e0e0"><span style="font-size:7px">T</span><span style="font-size:12px">T</span></div>
<div class="t" style="left:456px;top:160px;font-family:'Liberation Serif',serif;font-weight:bold;font-size:13px;line-height:14px;height:14px;color:#e0e0e0"><span style="font-size:9px;vertical-align:1px">I</span>T</div>
<div class="t" style="left:455px;top:178px;font-family:'Liberation Sans',sans-serif;font-size:9.5px;line-height:12px;height:12px;color:#e0e0e0;letter-spacing:-2px;font-weight:bold">VA</div>
<div class="t" style="left:533px;top:142px;font-family:'Liberation Sans',sans-serif;font-size:7px;line-height:7px;height:14px;color:#d0d0d0;text-align:center;width:10px;white-space:normal">A<br>A</div>
<svg style="left:532px;top:147px" width="3" height="8" viewBox="0 0 3 8"><path d="M1.5 0 V8 M0 1.5 L1.5 0 L3 1.5 M0 6.5 L1.5 8 L3 6.5" stroke="#c8c8c8" stroke-width="0.7" fill="none"/></svg>
<div class="t" style="left:534px;top:160px;font-family:'Liberation Serif',serif;font-size:12px;line-height:12px;height:12px;color:#d8d8d8;font-weight:bold">T</div>
<div class="a" style="left:532px;top:172px;width:12px;height:1px;background:#c8c8c8"></div>
<div class="a" style="left:532px;top:178px;width:13px;height:10px;background:#cfcfcf;color:#444;font-size:7px;line-height:10px;text-align:center;font-weight:bold;letter-spacing:-0.8px">VA</div>
<div class="a" style="left:532px;top:189px;width:13px;height:1px;background:#c8c8c8"></div>
<div class="a" style="left:452px;top:76px;width:1px;height:119px;background:#3a3a3a"></div>
<div class="a" style="left:452px;top:193.7px;width:149px;height:1.3px;background:#3c3c3c"></div>
<div class="a" style="left:600px;top:79px;width:1px;height:116px;background:#3e3e3e"></div>

<!-- ===== right partial panel ===== -->
<div class="a" id="rp" style="left:637px;top:67px;width:13px;height:118px;background:#505050"></div>
<div class="a" style="left:637px;top:67px;width:13px;height:8px;background:#3b3b3b"></div>


<div class="t" style="left:643px;top:79px;font-size:8px;color:#e0e0e0;font-weight:bold">导</div>
<svg style="left:642px;top:170px" width="8" height="4" viewBox="0 0 8 4"><path d="M0 4 L2.5 1 L4 2.5 L5.5 0.5 L8 4 Z" fill="#bdbdbd"/></svg>
<div class="a" style="left:637px;top:180px;width:13px;height:1px;background:#3e3e3e"></div>
<div class="a" style="left:637px;top:67px;width:1px;height:118px;background:#3a3a3a"></div>
<div class="a" style="left:637px;top:184px;width:13px;height:1px;background:#3a3a3a"></div>

<!-- ===== stroke panel ===== -->
<div class="a" id="stroke" style="left:7px;top:40px;width:146px;height:203px;background:#535353"></div>


<!-- stroke panel content -->
<div class="a" style="left:7px;top:40px;width:1px;height:203px;background:#5c5c5c"></div>
<div class="a" style="left:153px;top:44px;width:1px;height:199px;background:#3d3d3d"></div>
<div class="a" style="left:7px;top:243px;width:147px;height:1px;background:#3d3d3d"></div>
<div class="t" style="left:24px;top:45px">粗细 :</div>
<div class="a" style="left:47px;top:41.5px;width:57px;height:14.5px;background:#3c4046;border:1px solid #41699a;border-radius:2px"></div>
<svg style="left:50px;top:43.5px" width="6" height="11" viewBox="0 0 6 11"><path d="M0.5 3.7 L3 1.2 L5.5 3.7 M0.5 7.3 L3 9.8 L5.5 7.3" fill="none" stroke="#e0e0e0" stroke-width="1.2"/></svg>
<div class="a" style="left:59.5px;top:42.5px;width:32px;height:12.3px;background:#fff"></div>
<div class="a" style="left:61px;top:44px;width:20.5px;height:8.2px;background:#3a78c8"></div>
<div class="t mono" style="left:61px;top:43.5px;font-size:8px;letter-spacing:-0.6px;color:#e8f0ff">25 pt</div>
<svg style="left:94px;top:47px" width="6" height="4" viewBox="0 0 6 4"><path d="M0.5 0.5 L3 3 L5.5 0.5" fill="none" stroke="#f0d4b8" stroke-width="1.3"/></svg>
<div class="t" style="left:24px;top:61px">端点 :</div>
<!-- butt cap -->
<svg style="left:50px;top:60px" width="10" height="11" viewBox="0 0 10 11"><rect x="3" y="1" width="6" height="9" fill="#d4d4d4"/><path d="M3 5.5 H9" stroke="#535353" stroke-width="1"/><rect x="1.5" y="4" width="3" height="3" fill="#d4d4d4" stroke="#535353" stroke-width="0.6"/></svg>
<!-- round cap (selected) -->
<div class="a" style="left:61px;top:58px;width:16px;height:15px;background:#2f2f2f;border:1px solid #8a2323"></div>
<svg style="left:64px;top:60px" width="10" height="11" viewBox="0 0 10 11"><path d="M9.5 1 H5 A4.5 4.5 0 0 0 5 10 H9.5 Z" fill="#e4e4e4"/><path d="M4.5 5.5 H9.5" stroke="#2f2f2f" stroke-width="1"/><rect x="3.5" y="4.2" width="2.6" height="2.6" fill="#e4e4e4" stroke="#2f2f2f" stroke-width="0.6"/></svg>
<!-- projecting cap -->
<svg style="left:79px;top:60px" width="10" height="11" viewBox="0 0 10 11"><rect x="0.5" y="1" width="9" height="9" fill="#d4d4d4"/><path d="M4 5.5 H9.5" stroke="#535353" stroke-width="1"/><rect x="3" y="4.2" width="2.6" height="2.6" fill="#d4d4d4" stroke="#535353" stroke-width="0.6"/></svg>

<div class="t" style="left:24px;top:79px">边角 :</div>
<div class="a" style="left:48px;top:77px;width:13px;height:13px;background:#2f2f2f"></div>
<svg style="left:50px;top:79px" width="9" height="9" viewBox="0 0 9 9"><path d="M0 0 H9 V5.5 H5.5 V9 H0 Z" fill="#ececec"/><path d="M9 2.7 H2.7 V9" stroke="#2f2f2f" stroke-width="0.7" fill="none"/><rect x="1.5" y="1.5" width="2" height="2" fill="#e4e4e4" stroke="#2f2f2f" stroke-width="0.5"/></svg>
<svg style="left:64px;top:79px" width="9" height="9" viewBox="0 0 9 9"><path d="M9 0 H4.5 A4.5 4.5 0 0 0 0 4.5 V9 H5.5 V5.5 H9 Z" fill="#dcdcdc"/><path d="M9 2.7 H2.7 V9" stroke="#535353" stroke-width="0.7" fill="none"/><rect x="1.5" y="1.5" width="2" height="2" fill="#d0d0d0" stroke="#535353" stroke-width="0.5"/></svg>
<svg style="left:79px;top:79px" width="9" height="9" viewBox="0 0 9 9"><path d="M9 0 H3.5 L0 3.5 V9 H5.5 V5.5 H9 Z" fill="#dcdcdc"/><path d="M9 2.7 H2.7 V9" stroke="#535353" stroke-width="0.7" fill="none"/><rect x="1.5" y="1.5" width="2" height="2" fill="#d0d0d0" stroke="#535353" stroke-width="0.5"/></svg>
<div class="t" style="left:96px;top:79px;color:#c4c4c4">限制 :</div>
<div class="inp" style="left:120px;top:76px;width:25px;height:14px;background:#464646"></div>
<div class="t sans0" style="left:123px;top:78px;font-size:8px;letter-spacing:-0.4px">10</div>
<svg style="left:146.5px;top:82px" width="4" height="5" viewBox="0 0 4 5"><path d="M0 0.5 H4 M0 2.5 H4 M0 4.5 H4" stroke="#c8c8c8" stroke-width="0.9"/></svg>

<div class="t" style="left:8px;top:96px">对齐描边 :</div>
<div class="a" style="left:48px;top:94px;width:13px;height:13px;background:#2f2f2f"></div>
<svg style="left:50px;top:96px" width="9" height="9" viewBox="0 0 9 9"><path d="M0.5 0.5 H3.5 V5.5 H8.5 V8.5 H0.5 Z" fill="#e4e4e4"/><path d="M2 0.5 V7 H8.5" stroke="#2f2f2f" stroke-width="0.8" fill="none"/></svg>
<svg style="left:64px;top:96px" width="9" height="9" viewBox="0 0 9 9"><path d="M0.5 0.5 H3.5 V5.5 H8.5 V8.5 H0.5 Z" fill="#6c6c6c"/></svg>
<svg style="left:79px;top:96px" width="9" height="9" viewBox="0 0 9 9"><path d="M0.5 0.5 H3.5 V5.5 H8.5 V8.5 H0.5 Z" fill="#6c6c6c"/></svg>

<div class="a" style="left:8px;top:111px;width:145px;height:1px;background:#484848"></div>
<div class="a" style="left:9px;top:119px;width:8px;height:8px;border:1px solid #cfcfcf;border-radius:1px"></div>
<div class="t" style="left:20px;top:119px">虚线</div>
<div class="a" style="left:100px;top:115px;width:50px;height:15px;background:#575757"></div>
<div class="a" style="left:103px;top:118px;width:21px;height:9px;border:1px dashed #7c7c7c"></div>
<div class="a" style="left:127px;top:118px;width:21px;height:9px;border:1px dashed #7c7c7c"></div>
<div class="a" style="left:8px;top:134px;width:22px;height:12px;background:#575757"></div>
<div class="t" style="left:11px;top:147px;color:#727272">虚线</div>
<div class="a" style="left:32px;top:134px;width:22px;height:12px;background:#575757"></div>
<div class="t" style="left:35px;top:147px;color:#727272">间隙</div>
<div class="a" style="left:56px;top:134px;width:22px;height:12px;background:#575757"></div>
<div class="t" style="left:59px;top:147px;color:#727272">虚线</div>
<div class="a" style="left:80px;top:134px;width:22px;height:12px;background:#575757"></div>
<div class="t" style="left:83px;top:147px;color:#727272">间隙</div>
<div class="a" style="left:104px;top:134px;width:22px;height:12px;background:#575757"></div>
<div class="t" style="left:107px;top:147px;color:#727272">虚线</div>
<div class="a" style="left:128px;top:134px;width:22px;height:12px;background:#575757"></div>
<div class="t" style="left:131px;top:147px;color:#727272">间隙</div>

<div class="t" style="left:24px;top:166px">箭头 :</div>
<div class="wb" style="left:48px;top:164.7px;width:24px;height:12.3px"></div>
<div class="a" style="left:51px;top:169.5px;width:18px;height:2.6px;background:#111"></div>
<div class="a" style="left:72px;top:164.5px;width:10px;height:12.5px;background:#474747;border-radius:1.5px"></div><svg style="left:74px;top:169px" width="6" height="4" viewBox="0 0 6 4"><path d="M0.5 0.5 L3 3 L5.5 0.5" fill="none" stroke="#d6d6d6" stroke-width="1.3"/></svg>
<div class="wb" style="left:88px;top:164.7px;width:24px;height:12.3px"></div>
<div class="a" style="left:91px;top:169.5px;width:18px;height:2.6px;background:#111"></div>
<div class="a" style="left:113px;top:164.5px;width:10px;height:12.5px;background:#474747;border-radius:1.5px"></div><svg style="left:115px;top:169px" width="6" height="4" viewBox="0 0 6 4"><path d="M0.5 0.5 L3 3 L5.5 0.5" fill="none" stroke="#d6d6d6" stroke-width="1.3"/></svg>
<svg style="left:137px;top:167px" width="9" height="8" viewBox="0 0 9 8"><path d="M0.5 2 H8.5 M6.5 0.3 L8.5 2 M0.5 6 H8.5 M2.5 7.7 L0.5 6" stroke="#7a7a7a" stroke-width="1" fill="none"/></svg>
<div class="t" style="left:24px;top:185px;color:#727272">缩放 :</div>
<div class="a" style="left:47px;top:183px;width:35px;height:14px;background:#575757"></div>
<div class="t sans0" style="left:61px;top:185px;font-size:8px;letter-spacing:-0.6px;color:#6e6e6e">100%</div>
<svg style="left:50px;top:184px" width="6" height="11" viewBox="0 0 6 11"><path d="M0.5 3.7 L3 1.2 L5.5 3.7 M0.5 7.3 L3 9.8 L5.5 7.3" fill="none" stroke="#6e6e6e" stroke-width="1"/></svg>
<div class="a" style="left:88px;top:183px;width:35px;height:14px;background:#575757"></div>
<div class="t sans0" style="left:102px;top:185px;font-size:8px;letter-spacing:-0.6px;color:#6e6e6e">100%</div>
<svg style="left:91px;top:184px" width="6" height="11" viewBox="0 0 6 11"><path d="M0.5 3.7 L3 1.2 L5.5 3.7 M0.5 7.3 L3 9.8 L5.5 7.3" fill="none" stroke="#6e6e6e" stroke-width="1"/></svg>
<svg style="left:138px;top:184px" width="8" height="12" viewBox="0 0 8 12"><circle cx="3" cy="3" r="2.2" fill="none" stroke="#7a7a7a" stroke-width="1"/><circle cx="5" cy="9" r="2.2" fill="none" stroke="#7a7a7a" stroke-width="1"/><path d="M3.5 4.5 L4.5 7.5" stroke="#7a7a7a" stroke-width="1"/></svg>
<div class="t" style="left:24px;top:204px;color:#727272">对齐 :</div>
<div class="a" style="left:47px;top:203px;width:13px;height:13px;background:#585858"></div>
<div class="a" style="left:62px;top:203px;width:13px;height:13px;background:#585858"></div>
<svg style="left:49px;top:206px" width="9" height="7" viewBox="0 0 9 7"><path d="M0.5 3.5 H8.5 M5.5 1 L8 3.5 L5.5 6" stroke="#707070" stroke-width="1" fill="none"/></svg>
<svg style="left:64px;top:206px" width="9" height="7" viewBox="0 0 9 7"><path d="M0.5 3.5 H8.5 M4.5 1 L7 3.5 L4.5 6" stroke="#707070" stroke-width="1" fill="none"/></svg>
<div class="a" style="left:8px;top:219px;width:145px;height:1px;background:#4a4a4a"></div>
<div class="t" style="left:8px;top:226px">配置文件 :</div>
<div class="wb" style="left:48px;top:224.7px;width:55px;height:12.5px"></div>
<div class="a" style="left:51px;top:229.5px;width:32px;height:2.6px;background:#111"></div>
<div class="t" style="left:84px;top:226px;color:#333">等比</div>
<div class="a" style="left:104px;top:224.5px;width:10px;height:12.5px;background:#474747;border-radius:1.5px"></div><svg style="left:106px;top:229px" width="6" height="4" viewBox="0 0 6 4"><path d="M0.5 0.5 L3 3 L5.5 0.5" fill="none" stroke="#d6d6d6" stroke-width="1.3"/></svg>
<svg style="left:121px;top:226px" width="10" height="9" viewBox="0 0 10 9"><path d="M0.5 8 L4 1 V8 Z M9.5 8 L6 1 V8 Z" fill="#646464"/></svg>
<svg style="left:138px;top:225px" width="9" height="11" viewBox="0 0 9 11"><path d="M1 4.5 L8 1 V4.5 Z M1 6.5 L8 10 V6.5 Z" fill="#646464"/></svg>

</body>
</html>
